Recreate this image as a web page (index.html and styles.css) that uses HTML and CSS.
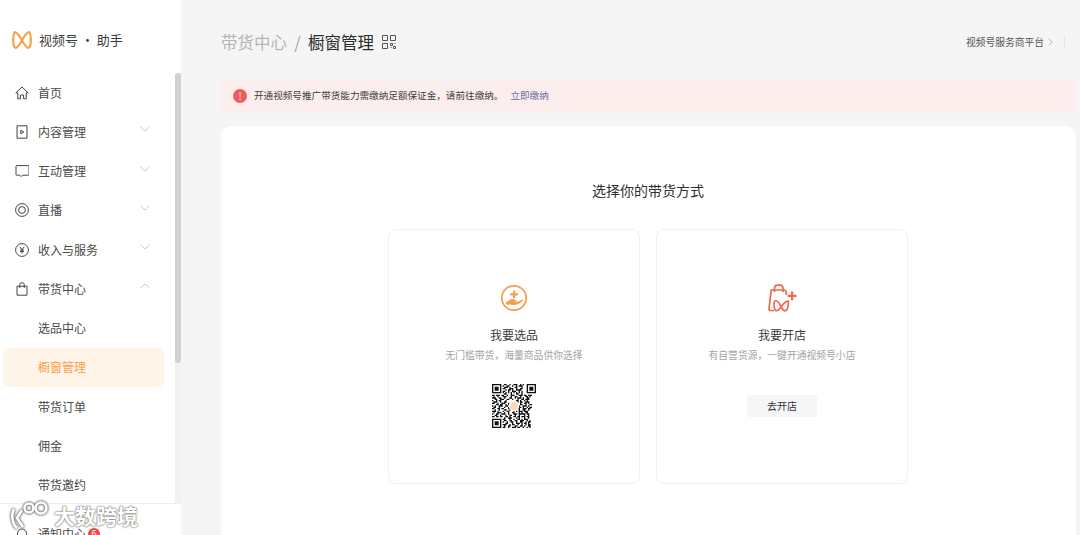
FILE: index.html
```html
<!DOCTYPE html>
<html lang="zh">
<head>
<meta charset="utf-8">
<title>视频号助手</title>
<link rel="stylesheet" href="styles.css">
</head>
<body>
<div class="app">
  <aside class="sidebar">
    <div class="logo">
      <svg class="logo-mark" viewBox="0 0 20 18"><path d="M2.200 1.200C4.800.800 7.800 5.500 10 9.500c2.200 4 4 7.300 6 7.300 2.300 0 2.900-4 2.800-8.300-.1-3.700-.4-7-1.600-7.300-2.600-.4-5 4.300-7.200 8.300s-4 7.300-6 7.300c-2.300 0-2.900-4-2.800-8.300.1-3.700.8-7 2-7.300Z"/></svg>
      <span>视频号 · 助手</span>
    </div>
    <div class="nav-wrap">
      <nav class="nav">
        <a class="item"><svg class="ico" viewBox="0 0 14 14"><path d="M.8 6.900 7 1l6.200 5.900h-2v5.900H8.600V9H5.400v3.800H2.800V6.900Z"/></svg><span>首页</span></a>
        <a class="item"><svg class="ico" viewBox="0 0 14 14"><path d="M2 .8h10v12.400H2Z"/><path d="M5.800 5.200 8.800 7l-3 1.800Z"/></svg><span>内容管理</span><svg class="chev" viewBox="0 0 10 6"><path d="M.5.800 5 5 9.500.800"/></svg></a>
        <a class="item"><svg class="ico" viewBox="0 0 14 14"><path d="M1.600 1.600h11.800a.6.600 0 0 1 .6.600v8.400a.6.600 0 0 1-.6.600H7.600l-1.400 1.400-1.400-1.400H1.600a.6.600 0 0 1-.6-.6V2.200a.6.600 0 0 1 .6-.6Z"/></svg><span>互动管理</span><svg class="chev" viewBox="0 0 10 6"><path d="M.5.800 5 5 9.500.800"/></svg></a>
        <a class="item"><svg class="ico" viewBox="0 0 14 14"><circle cx="7" cy="7" r="6.400"/><circle cx="7" cy="7" r="3.400"/></svg><span>直播</span><svg class="chev" viewBox="0 0 10 6"><path d="M.5.800 5 5 9.500.800"/></svg></a>
        <a class="item"><svg class="ico" viewBox="0 0 14 14"><circle cx="7" cy="7" r="6.400"/><path d="M4.800 3.800 7 6.600l2.200-2.800M7 6.600v3.800M5 7h4M5 8.600h4"/></svg><span>收入与服务</span><svg class="chev" viewBox="0 0 10 6"><path d="M.5.800 5 5 9.500.800"/></svg></a>
        <a class="item"><svg class="ico" viewBox="0 0 14 14"><path d="M2 4.200h10v9H2Z"/><path d="M4.800 6V2.500a2.200 1.800 0 0 1 4.400 0V6"/></svg><span>带货中心</span><svg class="chev" viewBox="0 0 10 6"><path d="M.5 5.200 5 1l4.500 4.200"/></svg></a>
        <a class="item sub"><span>选品中心</span></a>
        <a class="item sub active"><span>橱窗管理</span></a>
        <a class="item sub"><span>带货订单</span></a>
        <a class="item sub"><span>佣金</span></a>
        <a class="item sub"><span>带货邀约</span></a>
      </nav>
      <div class="scrollbar"><div class="thumb"></div></div>
    </div>
    <div class="side-foot">
      <a class="item"><svg class="ico" viewBox="0 0 14 14"><path d="M2.500 11V6.500a4.500 4.500 0 0 1 9 0V11h1.500H1Z"/></svg><span>通知中心</span><b class="badge">6</b></a>
    </div>
  </aside>

  <main class="main">
    <header class="topbar">
      <div class="crumbs">
        <span class="crumb-prev">带货中心</span>
        <span class="crumb-sep">/</span>
        <span class="crumb-cur">橱窗管理</span>
        <svg class="qr-mini" viewBox="0 0 14 14"><path d="M.5.500h5v5h-5ZM8.500.500h5v5h-5ZM.5 8.500h5v5h-5Z"/><path d="M8.500 8.500h2v2h-2ZM11.500 11.500h2v2h-2ZM8.500 12.500h1M12.500 8.500h1"/></svg>
      </div>
      <div class="top-right">
        <span>视频号服务商平台</span>
        <svg class="top-chev" viewBox="0 0 5 8"><path d="M.6.600 4.200 4 .6 7.400"/></svg>
        <i class="top-div"></i>
      </div>
    </header>

    <div class="alert">
      <b class="alert-ico">!</b>
      <span class="alert-text">开通视频号推广带货能力需缴纳足额保证金，请前往缴纳。</span>
      <a class="alert-link">立即缴纳</a>
    </div>

    <section class="panel">
      <h1 class="panel-title">选择你的带货方式</h1>
      <div class="options">
        <article class="option">
          <svg class="opt-ico" viewBox="0 0 28 28"><circle class="o-line" cx="14" cy="14" r="12.200"/><path class="o-fill" d="M13 6.500h2.200v2.800H18v2.200h-2.800v2.800H13v-2.800h-2.800V9.300H13Z"/><path class="o-fill" d="M5.500 18.500 10 15.800c1.300-.8 2.600-.9 4-.4l2.700 1c.9.400.5 1.500-.5 1.400l-3.400-.3 3.800.7 6-2.700c.6-.3 1 .4.600.8-2.600 2.700-5.300 4.700-9 4.700-2 0-3.200-.7-4.800-.6l-2.200.7Z"/></svg>
          <h2 class="opt-title">我要选品</h2>
          <p class="opt-sub">无门槛带货，海量商品供你选择</p>
          <div class="qr">
            <svg viewBox="0 0 33 33">
              <path class="qr-finder" d="M0 0h7v7H0ZM1 1v5h5V1ZM2 2h3v3H2ZM26 0h7v7h-7ZM27 1v5h5V1ZM28 2h3v3h-3ZM0 26h7v7H0ZM1 27v5h5v-5ZM2 28h3v3H2Z"/>
              <path class="qr-data" d="M9 .5h2m2 0h1m2 0h3m2 0h1m1 0h1M8 1.500h1m2 0h2m2 0h1m2 0h1m1 0h3M9 2.500h3m1 0h1m3 0h2m3 0h1M8 3.500h2m3 0h3m2 0h1m2 0h2M10 4.500h1m1 0h2m1 0h1m2 0h4M8 5.500h2m2 0h1m2 0h3m2 0h1m1 0h1M8 6.500h1m1 0h1m1 0h1m1 0h1m1 0h1m1 0h1m1 0h1m1 0h1M9 7.500h2m3 0h1m3 0h2m2 0h1M0 8.500h2m1 0h3m1 0h2m2 0h1m2 0h3m3 0h3m1 0h2m1 0h3M1 9.500h1m2 0h1m3 0h3m3 0h1m2 0h2m2 0h1m3 0h2m1 0h1M0 10.500h3m2 0h2m2 0h1m3 0h2m2 0h1m1 0h3m1 0h1m2 0h2M2 11.500h2m2 0h3m2 0h2m2 0h1m3 0h1m2 0h2m1 0h3M0 12.500h1m2 0h1m1 0h2m3 0h1m7 0h2m1 0h1m2 0h1m1 0h1M1 13.500h3m2 0h1m2 0h2m8 0h1m1 0h2m2 0h3M0 14.500h2m2 0h1m2 0h3m2 0h1m8 0h1m2 0h2m1 0h1M3 15.500h2m1 0h2m2 0h1m1 0h1m8 0h2m2 0h1m2 0h2M0 16.500h1m1 0h1m2 0h3m2 0h2m8 0h1m2 0h3m1 0h1M1 17.500h2m2 0h1m3 0h1m2 0h1m7 0h2m1 0h1m2 0h1m1 0h2M0 18.500h2m2 0h2m1 0h2m3 0h2m2 0h1m2 0h2m2 0h3m1 0h2M2 19.500h1m2 0h1m3 0h2m2 0h1m1 0h3m2 0h1m2 0h2m2 0h1M0 20.500h3m1 0h1m3 0h1m2 0h2m3 0h1m1 0h1m1 0h3m1 0h3M1 21.500h1m2 0h3m2 0h1m2 0h1m2 0h2m3 0h1m1 0h1m2 0h2M0 22.500h1m2 0h2m2 0h3m2 0h1m3 0h3m1 0h5m1 0h2M2 23.500h2m2 0h1m3 0h1m2 0h2m2 0h1m2 0h1m3 0h1m2 0h1M0 24.500h2m1 0h2m1 0h2m2 0h2m1 0h1m2 0h2m1 0h2m1 0h3m1 0h2M9 25.500h1m2 0h3m3 0h1m1 0h1m3 0h1m2 0h1M8 26.500h2m3 0h1m2 0h1m2 0h2m1 0h1m1 0h3M9 27.500h2m2 0h2m2 0h2m2 0h3m2 0h1m1 0h1M8 28.500h1m2 0h1m2 0h2m2 0h1m2 0h2m2 0h1m1 0h2M10 29.500h2m3 0h1m2 0h3m1 0h1m1 0h2m1 0h1M8 30.500h3m2 0h1m1 0h2m2 0h1m2 0h1m2 0h1m1 0h2M9 31.500h1m2 0h2m3 0h2m2 0h2m1 0h1m2 0h2M8 32.500h2m2 0h1m2 0h3m1 0h2m2 0h1m2 0h1m1 0h1"/>
              <circle class="qr-badge" cx="16.500" cy="16.500" r="3.500"/>
            </svg>
          </div>
        </article>
        <article class="option">
          <svg class="opt-ico opt-ico-wide" viewBox="0 0 30 28"><path class="o-red" d="M18.500 6H4.200L2 25c-.1 1 .5 1.500 1.400 1.500H7"/><path class="o-red" d="M18.500 6 19.500 11"/><path class="o-red" d="M7.500 8V3.800a3 3 0 0 1 3-2.600h2.500a3 3 0 0 1 3 2.600V8"/><path class="o-red" d="M8.500 16.500c2.300 0 4 3 5.500 6 1 2 2.200 4.300 4 4.300 2.500 0 3.600-4 3.300-9.800-3.200.3-5 2.600-6.800 5.300-1.600 2.400-3 4.400-4.800 4.300-3-.1-3.800-9.900-1.200-10.100Z"/><path class="o-redfill" d="M24 7.500h2.200v3.300h3.300V13h-3.300v3.300H24V13h-3.300v-2.200H24Z"/></svg>
          <h2 class="opt-title">我要开店</h2>
          <p class="opt-sub">有自营货源，一键开通视频号小店</p>
          <button class="open-btn">去开店</button>
        </article>
      </div>
    </section>
  </main>
</div>

<div class="watermark">
  <svg class="wm-logo" viewBox="0 0 40 28"><path d="M5 8C2 13 3 23 8 27M13 9l-5 8 6 9"/><circle cx="20" cy="7" r="4.500"/><circle cx="32" cy="7" r="5.500"/></svg>
  <span>大数跨境</span>
</div>
</body>
</html>
```
FILE: styles.css
```css
* { box-sizing: border-box; }
html, body { margin: 0; height: 100%; overflow: hidden; }
body {
  background: #f5f5f5;
  color: #353535;
  font-family: "Noto Sans CJK SC", "Noto Sans", sans-serif;
  font-size: 12px;
}
h1, h2, p { margin: 0; font-weight: 400; }

.app { display: flex; height: 535px; }

/* Sidebar */
.sidebar {
  width: 181px;
  flex: none;
  background: #fff;
  display: flex;
  flex-direction: column;
  height: 100%;
}
.logo {
  height: 73px;
  flex: none;
  display: flex;
  align-items: center;
  gap: 7px;
  padding: 6px 0 0 12px;
  font-size: 13px;
  color: #3a3a3a;
}
.logo-mark { width: 20px; height: 18px; fill: none; stroke: #f6a24b; stroke-width: 2.200; }

.nav-wrap { flex: 1; min-height: 0; display: flex; }
.nav { flex: 1; min-width: 0; overflow: hidden; }
.scrollbar { width: 6px; flex: none; background: #f2f2f2; }
.thumb { height: 290px; background: #d2d2d4; border-radius: 3px; }

.item {
  height: 39.260px;
  display: flex;
  align-items: center;
  padding: 0 25px 0 15px;
  gap: 9px;
  color: #4a4a4a;
  line-height: 16px;
}
.item span { flex: none; }
.ico {
  width: 14px;
  height: 14px;
  flex: none;
  fill: none;
  stroke: #444;
  stroke-width: 1;
}
.chev {
  width: 10px;
  height: 6px;
  margin: 0 0 5px auto;
  fill: none;
  stroke: #c2c2c2;
  stroke-width: .9;
}
.sub { padding-left: 38px; }
.active {
  margin: 0 11px 0 3px;
  padding-left: 35px;
  background: #fff4e8;
  border-radius: 7px;
  color: #f7a24e;
}

.side-foot {
  flex: none;
  height: 32px;
  overflow: hidden;
  border-top: 1px solid #eeeeee;
  padding-top: 10px;
}
.badge {
  width: 12px;
  height: 12px;
  margin: 0 0 0 -7px;
  border-radius: 50%;
  background: #f0474a;
  color: #fff;
  font-size: 9px;
  line-height: 12px;
  font-weight: 400;
  text-align: center;
}

/* Main */
.main {
  flex: 1;
  min-width: 0;
  padding: 0 4px 0 40px;
  display: flex;
  flex-direction: column;
}
.topbar {
  height: 79px;
  flex: none;
  display: flex;
  align-items: center;
  justify-content: space-between;
  padding-top: 5px;
}
.crumbs { display: flex; align-items: center; font-size: 16.500px; line-height: 24px; }
.crumb-prev { color: #b5b5b5; }
.crumb-sep { color: #a5a5a5; width: 21px; text-align: center; }
.crumb-cur { color: #2d2d2d; }
.qr-mini {
  width: 14px;
  height: 14px;
  margin-left: 8px;
  fill: none;
  stroke: #555;
  stroke-width: 1;
}
.top-right {
  display: flex;
  align-items: center;
  margin-left: -1px;
  font-size: 9.750px;
  color: #555;
}
.top-chev {
  width: 5px;
  height: 8px;
  margin-left: 4px;
  fill: none;
  stroke: #aaa;
  stroke-width: .8;
}
.top-div {
  width: 1px;
  height: 10px;
  margin: 0 11px;
  background: #e4e4e4;
}

.alert {
  height: 33px;
  flex: none;
  display: flex;
  align-items: center;
  padding: 0 0 2px 12px;
  background: #fdeeee;
  border-radius: 6px;
  font-size: 9.600px;
}
.alert-ico {
  width: 14px;
  height: 14px;
  margin: 2px 7px 0 0;
  border-radius: 50%;
  background: #f4595b;
  color: #fff;
  font-size: 10px;
  line-height: 14px;
  text-align: center;
  font-weight: 400;
}
.alert-text { color: #3d3d3d; }
.alert-link { margin-left: 7px; color: #6d6f9e; }

.panel {
  flex: 1;
  margin-top: 14px;
  padding: 55px 1px 0 0;
  background: #fff;
  border-radius: 10px 10px 0 0;
  display: flex;
  flex-direction: column;
  align-items: center;
}
.panel-title { font-size: 14px; line-height: 18px; color: #2f2f2f; }
.options { display: flex; gap: 16px; margin-top: 30px; }
.option {
  width: 252px;
  height: 255px;
  padding-top: 54px;
  border: 1px solid #efefef;
  border-radius: 8px;
  display: flex;
  flex-direction: column;
  align-items: center;
}
.opt-ico { width: 28px; height: 28px; }
.opt-ico-wide { width: 30px; }
.o-line { fill: none; stroke: #f4a04a; stroke-width: 1.700; }
.o-fill { fill: #f4a04a; }
.o-red { fill: none; stroke: #ee6a4e; stroke-width: 1.700; }
.o-redfill { fill: #ee6a4e; }
.opt-title { margin-top: 15px; font-size: 12px; line-height: 16px; color: #3a3a3a; }
.opt-sub { margin-top: 5px; font-size: 9.800px; line-height: 14px; color: #a3a3a3; }
.qr { width: 44px; height: 44px; margin-top: 22px; }
.qr svg { display: block; width: 44px; height: 44px; }
.qr-finder { fill: #111; fill-rule: evenodd; }
.qr-data { fill: none; stroke: #111; stroke-width: 1; }
.qr-badge { fill: #f9d9ba; stroke: #fff; stroke-width: 1; }
.open-btn {
  width: 70px;
  height: 22px;
  margin-top: 33px;
  padding: 0;
  border: 0;
  border-radius: 3px;
  background: #f6f6f6;
  color: #333;
  font: 10px/20px "Noto Sans CJK SC", sans-serif;
}

/* Watermark lying over the sidebar corner */
.watermark {
  position: absolute;
  left: 9px;
  top: 500px;
  display: flex;
  align-items: center;
  gap: 5px;
  font-size: 21px;
  line-height: 30px;
  font-weight: 700;
  color: #fff;
  text-shadow: 0 0 1px #777, 0 0 2px #888, 0 0 2px #999;
}
.wm-logo {
  width: 40px;
  height: 28px;
  fill: none;
  stroke: #fff;
  stroke-width: 2.600;
  filter: drop-shadow(0 0 1px #555) drop-shadow(0 0 1px #999);
}
```
